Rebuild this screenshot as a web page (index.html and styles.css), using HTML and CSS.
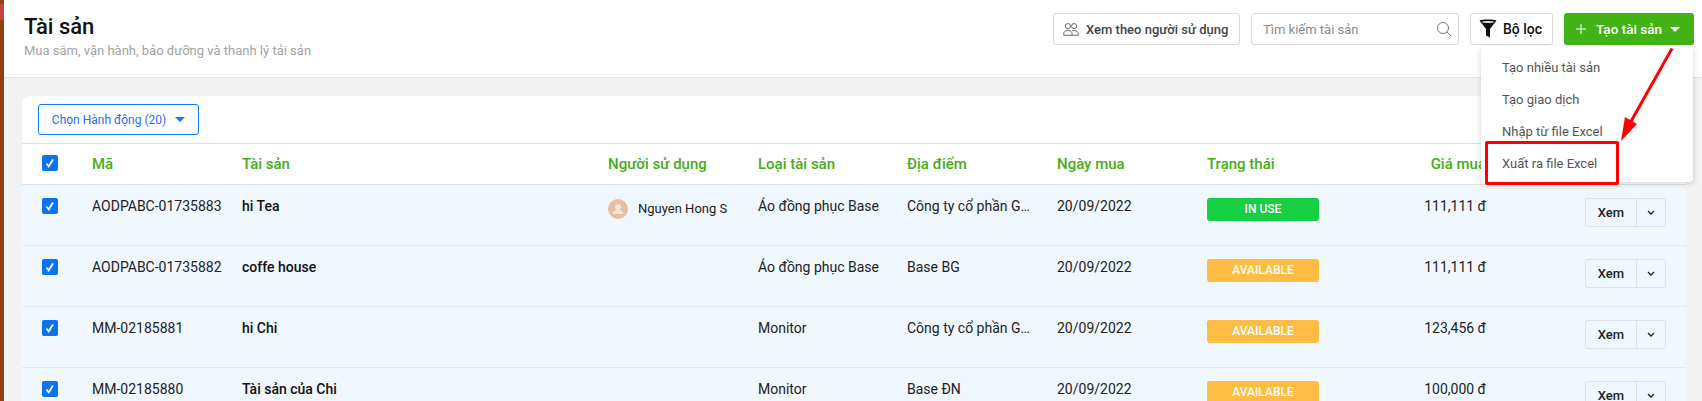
FILE: index.html
```html
<!DOCTYPE html>
<html lang="vi">
<head>
<meta charset="utf-8">
<title>Tài sản</title>
<link rel="stylesheet" href="styles.css">
</head>
<body>
<div class="app">
  <aside class="rail"><span class="rail-mark"></span></aside>
  <main class="main">
    <header class="page-head">
      <div class="titles">
        <h1>Tài sản</h1>
        <p>Mua sắm, vận hành, bảo dưỡng và thanh lý tải sản</p>
      </div>
      <div class="tools">
        <button class="btn view-by">
          <svg width="16" height="15" viewBox="0 0 18 16" fill="none" stroke="#666" stroke-width="1.1"><circle cx="5.5" cy="4.2" r="2.9"/><circle cx="12.5" cy="4.2" r="2.9"/><path d="M.8 14.5v-1.8c0-2 1.7-3.5 3.7-3.5h2c2 0 3.7 1.500 3.700 3.500v1.800z"/><path d="M10.200 9.300c.6-.1 1.300-.1 2.300-.1 2.600 0 4.700 1.400 4.700 3.500v1.800h-7"/></svg>
          Xem theo người sử dụng
        </button>
        <label class="search">
          <input type="text" placeholder="Tìm kiếm tài sản">
          <svg width="16" height="16" viewBox="0 0 16 16" fill="none" stroke="#777" stroke-width="1"><circle cx="7" cy="7" r="5.500"/><path d="M11 11l4 4"/></svg>
        </label>
        <button class="btn filter">
          <svg width="18" height="20" viewBox="0 0 18 20"><path d="M0.500 1.500C3 .3 15 .3 17.500 1.500L11 10v8.500L7 16.500V10z" fill="#111"/><ellipse cx="9" cy="3" rx="6" ry="1.100" fill="#ddd"/></svg>
          Bộ lọc
        </button>
        <button class="btn create">
          <svg width="12" height="12" viewBox="0 0 12 12" stroke="#fff" stroke-width="1"><path d="M6 1v10M1 6h10"/></svg>
          <span>Tạo tài sản</span>
          <i class="caret caret-white"></i>
        </button>
      </div>
    </header>

    <section class="card">
      <div class="bulk">
        <button class="bulk-btn">Chọn Hành động (20) <i class="caret caret-blue"></i></button>
      </div>
      <div class="row head">
        <span class="check"><svg width="16" height="16" viewBox="0 0 16 16"><path d="M4.500 8.500l2.200 3L11 4.500" fill="none" stroke="#fff" stroke-width="1.800"/></svg></span>
        <span>Mã</span><span>Tài sản</span><span>Người sử dụng</span><span>Loại tài sản</span><span>Địa điểm</span><span>Ngày mua</span><span>Trạng thái</span><span class="price">Giá mua</span>
      </div>

      <div class="row item">
        <span class="check"><svg width="16" height="16" viewBox="0 0 16 16"><path d="M4.500 8.500l2.200 3L11 4.500" fill="none" stroke="#fff" stroke-width="1.800"/></svg></span>
        <span>AODPABC-01735883</span><b>hi Tea</b>
        <span class="user"><svg class="avatar" width="20" height="20" viewBox="0 0 20 20"><circle cx="10" cy="10" r="10" fill="#e6bfa3"/><circle cx="10" cy="8" r="3" fill="#f7e6d9"/><path d="M4.500 15c.5-3 3-4 5.500-4s5 1 5.500 4z" fill="#f7e6d9"/></svg><span class="user-name">Nguyen Hong S</span></span>
        <span>Áo đồng phục Base</span><span class="clip">Công ty cổ phần Giáo</span><span>20/09/2022</span>
        <span class="badge in-use">IN USE</span><span class="price">111,111 đ</span>
        <span class="acts"><button>Xem</button><button class="more"><svg width="8" height="6" viewBox="0 0 8 6" fill="none" stroke="#222" stroke-width="1.300"><path d="M1 1l3 3 3-3"/></svg></button></span>
      </div>

      <div class="row item">
        <span class="check"><svg width="16" height="16" viewBox="0 0 16 16"><path d="M4.500 8.500l2.200 3L11 4.500" fill="none" stroke="#fff" stroke-width="1.800"/></svg></span>
        <span>AODPABC-01735882</span><b>coffe house</b>
        <span></span>
        <span>Áo đồng phục Base</span><span class="clip">Base BG</span><span>20/09/2022</span>
        <span class="badge avail">AVAILABLE</span><span class="price">111,111 đ</span>
        <span class="acts"><button>Xem</button><button class="more"><svg width="8" height="6" viewBox="0 0 8 6" fill="none" stroke="#222" stroke-width="1.300"><path d="M1 1l3 3 3-3"/></svg></button></span>
      </div>

      <div class="row item">
        <span class="check"><svg width="16" height="16" viewBox="0 0 16 16"><path d="M4.500 8.500l2.200 3L11 4.500" fill="none" stroke="#fff" stroke-width="1.800"/></svg></span>
        <span>MM-02185881</span><b>hi Chi</b>
        <span></span>
        <span>Monitor</span><span class="clip">Công ty cổ phần Giáo</span><span>20/09/2022</span>
        <span class="badge avail">AVAILABLE</span><span class="price">123,456 đ</span>
        <span class="acts"><button>Xem</button><button class="more"><svg width="8" height="6" viewBox="0 0 8 6" fill="none" stroke="#222" stroke-width="1.300"><path d="M1 1l3 3 3-3"/></svg></button></span>
      </div>

      <div class="row item">
        <span class="check"><svg width="16" height="16" viewBox="0 0 16 16"><path d="M4.500 8.500l2.200 3L11 4.500" fill="none" stroke="#fff" stroke-width="1.800"/></svg></span>
        <span>MM-02185880</span><b>Tài sản của Chi</b>
        <span></span>
        <span>Monitor</span><span class="clip">Base ĐN</span><span>20/09/2022</span>
        <span class="badge avail">AVAILABLE</span><span class="price">100,000 đ</span>
        <span class="acts"><button>Xem</button><button class="more"><svg width="8" height="6" viewBox="0 0 8 6" fill="none" stroke="#222" stroke-width="1.300"><path d="M1 1l3 3 3-3"/></svg></button></span>
      </div>
    </section>
  </main>

  <ul class="menu">
    <li>Tạo nhiều tài sản</li>
    <li>Tạo giao dịch</li>
    <li>Nhập từ file Excel</li>
    <li>Xuất ra file Excel</li>
  </ul>
  <div class="callout"></div>
  <svg class="arrow" width="60" height="100" viewBox="0 0 60 100"><path d="M54 1.500L11 78" fill="none" stroke="#f00" stroke-width="3"/><path d="M3 94L7 70 19 77z" fill="#f00"/></svg>
</div>
</body>
</html>
```
FILE: styles.css
```css
* { box-sizing: border-box; }
html, body { margin: 0; height: 100%; overflow: hidden; }
body { font-family: Roboto, "Liberation Sans", sans-serif; font-size: 14px; color: #222; background: #f2f2f2; }
button { font-family: inherit; }
.app { position: relative; display: flex; height: 401px; overflow: hidden; }
.rail { flex: 0 0 4px; background: #8f4210; }
.rail-mark { display: block; height: 16px; margin-top: 4px; background: #c4453f; }
.main { flex: 1; min-width: 0; }
.page-head { display: flex; justify-content: space-between; height: 78px; padding: 13px 8px 0 20px; background: #fff; border-bottom: 1px solid #e2e2e2; }
.titles h1 { margin: 0; font-size: 22px; line-height: 28px; font-weight: 500; color: #111; }
.titles p { margin: 2px 0 0; font-size: 13px; line-height: 16px; color: #a3a3a3; }
.tools { display: flex; gap: 11px; height: 32px; }
.btn { display: flex; align-items: center; height: 32px; background: #fff; border: 1px solid #d9d9d9; border-radius: 3px; font-size: 14px; font-weight: 500; color: #444; padding: 0; }
.view-by { width: 187px; padding-left: 9px; gap: 7px; white-space: nowrap; font-size: 13px; }
.search { display: flex; align-items: center; width: 208px; height: 32px; padding: 0 6px 0 11px; border: 1px solid #d9d9d9; border-radius: 3px; background: #fff; }
.search input { flex: 1; min-width: 0; border: 0; outline: 0; padding: 0; font: 13px Roboto, sans-serif; }
.search input::placeholder { color: #8a8a8a; opacity: 1; }
.filter { width: 83px; padding-left: 8px; gap: 6px; color: #111; }
.create { width: 130px; padding-left: 11px; border: 0; background: #43b216; color: #fff; border-radius: 3px; font-size: 13.500px; }
.create span { margin-left: 9px; }
.caret { display: inline-block; border-style: solid; border-width: 5px 5px 0; border-color: transparent; }
.caret-white { margin-left: 8px; border-top-color: #fff; }
.caret-blue { margin-left: 6px; border-top-color: #0a7cff; vertical-align: 2px; }
.card { margin: 18px 16px 0 18px; background: #fff; border-radius: 8px 8px 0 0; }
.bulk { height: 48px; padding: 8px 0 0 16px; border-bottom: 1px solid #e2e2e2; }
.bulk-btn { width: 161px; height: 31px; padding: 0; background: #fff; border: 1px solid #0a7cff; border-radius: 3px; color: #2a6cf0; font-size: 12px; }
.row { display: grid; grid-template-columns: 70px 150px 366px 150px 149px 150px 150px 150px 129px 99px 81px; }
.head { height: 41px; align-items: center; border-bottom: 1px solid #e2e2e2; color: #46ad18; font-size: 15px; font-weight: 500; }
.item { height: 61px; background: #f0f7ff; border-bottom: 1px solid #e4e7ec; padding-top: 11px; line-height: 20px; align-items: start; font-size: 14px; }
.item b { font-weight: 500; color: #111; }
.check { display: block; width: 16px; height: 16px; margin: 2px 0 0 20px; background: #0a74f0; border-radius: 2px; }
.head .check { margin-top: -2px; }
.price { text-align: right; }
.user { display: flex; align-items: center; gap: 10px; margin-top: 2px; white-space: nowrap; }
.avatar { flex: none; }
.user-name { font-size: 13px; margin-top: 1px; }
.clip { width: 124px; overflow: hidden; white-space: nowrap; text-overflow: ellipsis; }
.badge { width: 112px; height: 23px; margin-top: 2px; border-radius: 3px; text-align: center; color: #fff; font-size: 12px; font-weight: 500; line-height: 23px; }
.in-use { background: #16cf42; }
.avail { background: #ffbc42; }
.acts { grid-column: 11; display: flex; height: 29px; margin-top: 2px; border: 1px solid #dde2ea; border-radius: 3px; }
.acts button { flex: 1; padding: 0; border: 0; background: transparent; font-size: 13px; font-weight: 500; color: #222; }
.acts .more { flex: 0 0 29px; border-left: 1px solid #dde2ea; line-height: 0; }
.menu { position: absolute; left: 1481px; top: 46px; width: 212px; height: 136px; margin: 0; padding: 6px 0 0; list-style: none; background: #fff; border-radius: 4px; box-shadow: 0 2px 6px rgba(0,0,0,.16); }
.menu li { height: 32px; padding-left: 21px; font-size: 13px; line-height: 32px; color: #555; }
.callout { position: absolute; left: 1485px; top: 141px; width: 134px; height: 44px; border: 3px solid #f00; border-radius: 2px; }
.arrow { position: absolute; left: 1618px; top: 47px; }
```
